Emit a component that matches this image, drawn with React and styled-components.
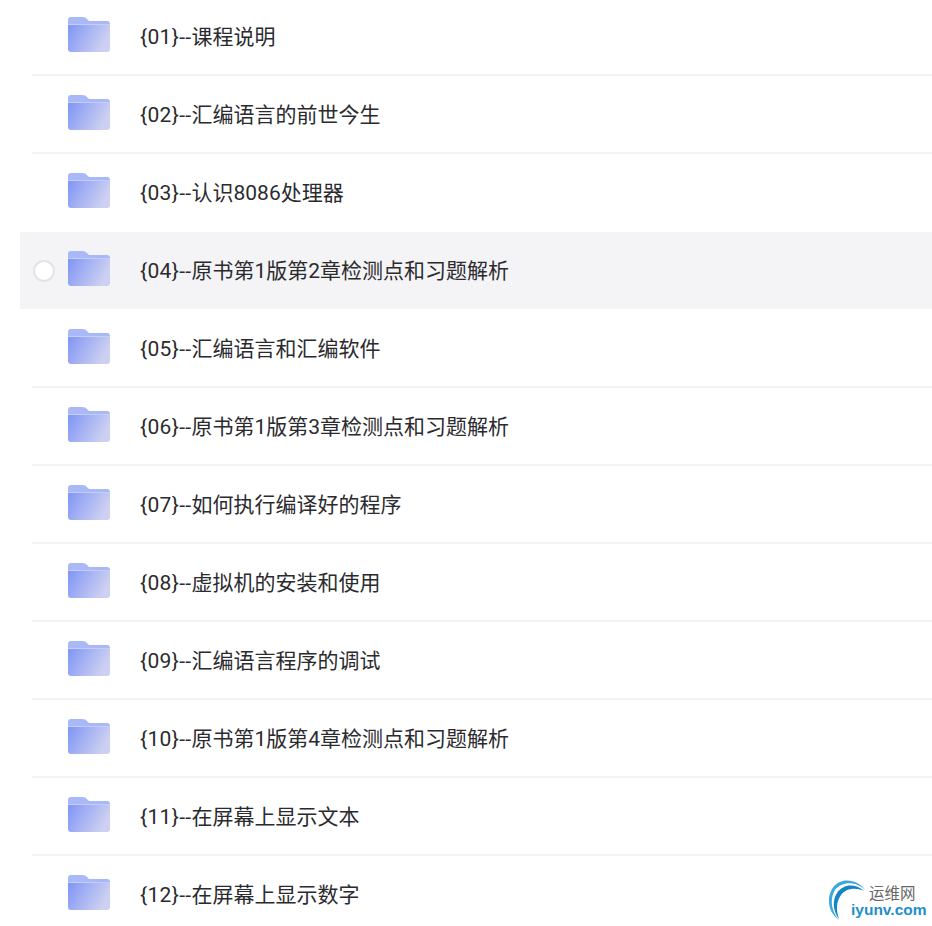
import React from "react";
import styled, { createGlobalStyle } from "styled-components";

const Global = createGlobalStyle`
  html, body {
    margin: 0;
    padding: 0;
    background: #fff;
    overflow: hidden;
  }
`;

const Page = styled.div`
  position: relative;
  width: 932px;
  height: 926px;
  overflow: hidden;
  background: #fff;
`;

const List = styled.ul`
  list-style: none;
  margin: -2px 0 0;
  padding: 0 0 0 20px;
`;

const Row = styled.li`
  height: 78px;
  box-sizing: border-box;
  padding-left: 12px;
  background: ${(p) => (p.$active ? "#f4f4f6" : "transparent")};
  border-bottom: ${(p) => (p.$active ? "1px solid #fff" : "0")};
`;

const RowInner = styled.div`
  display: flex;
  align-items: center;
  height: ${(p) => (p.$active ? "78px" : "100%")};
  box-sizing: border-box;
  padding-bottom: 2px;
  border-bottom: 2px solid ${(p) => (p.$plain ? "transparent" : "#f3f3f4")};
`;

const Check = styled.span`
  flex: none;
  width: 18px;
  height: 18px;
  margin: 4px 12px 0 1px;
  border: 2px solid #e3e3e5;
  border-radius: 50%;
  background: #fff;
  visibility: ${(p) => (p.$show ? "visible" : "hidden")};
`;

const FolderIcon = styled.svg`
  flex: none;
  width: 44px;
  height: 36px;
  margin: 0 29px 2px 0;
`;

const Name = styled.span`
  font-family: Roboto, "Noto Sans CJK SC", sans-serif;
  font-size: 21px;
  color: #2b2b2f;
  white-space: nowrap;
`;

const Prefix = styled.span`
  letter-spacing: 0.34px;
`;

const Mark = styled.div`
  position: absolute;
  left: 828px;
  top: 878px;
  width: 104px;
  height: 44px;
`;

const MarkArc = styled.svg`
  position: absolute;
  left: 0;
  top: 0;
  width: 44px;
  height: 44px;
`;

const MarkCn = styled.span`
  position: absolute;
  left: 41px;
  top: 5px;
  font-family: "Noto Sans CJK SC", sans-serif;
  font-size: 15.5px;
  line-height: 18px;
  color: #666;
`;

const MarkEn = styled.span`
  position: absolute;
  left: 23px;
  top: 23px;
  font-family: "Liberation Sans", sans-serif;
  font-size: 15.5px;
  font-weight: bold;
  line-height: 18px;
  color: #1d8fc9;
`;

const items = [
  ["{01}--", "课程说明"],
  ["{02}--", "汇编语言的前世今生"],
  ["{03}--", "认识8086处理器"],
  ["{04}--", "原书第1版第2章检测点和习题解析"],
  ["{05}--", "汇编语言和汇编软件"],
  ["{06}--", "原书第1版第3章检测点和习题解析"],
  ["{07}--", "如何执行编译好的程序"],
  ["{08}--", "虚拟机的安装和使用"],
  ["{09}--", "汇编语言程序的调试"],
  ["{10}--", "原书第1版第4章检测点和习题解析"],
  ["{11}--", "在屏幕上显示文本"],
  ["{12}--", "在屏幕上显示数字"],
];

const Folder = ({ id }) => (
  <FolderIcon viewBox="0 0 44 36">
    <defs>
      <linearGradient id={id} x1="0" y1="0" x2="1" y2="0.35">
        <stop offset="0" stopColor="#7f95f5" />
        <stop offset="1" stopColor="#cdd0f1" />
      </linearGradient>
    </defs>
    <path
      d="M1 4a3 3 0 0 1 3-3h11c2.5 0 4 .8 5.5 2.5L22 5h18a3 3 0 0 1 3 3v6H1z"
      fill="#a9b8f6"
    />
    <path
      d="M1 9h42v24a3 3 0 0 1-3 3H4a3 3 0 0 1-3-3z"
      fill={`url(#${id})`}
    />
    <rect x="1" y="8" width="42" height="1" fill="#c4cefa" />
  </FolderIcon>
);

export default function App() {
  return (
    <Page>
      <Global />
      <List>
        {items.map(([prefix, title], i) => (
          <Row key={prefix} $active={i === 3}>
            <RowInner $active={i === 3} $plain={i === 2 || i === 3}>
              <Check $show={i === 3} />
              <Folder id={`folder-${i}`} />
              <Name>
                <Prefix>{prefix}</Prefix>
                {title}
              </Name>
            </RowInner>
          </Row>
        ))}
      </List>
      <Mark>
        <MarkArc viewBox="0 0 44 44">
          <path d="M38 13C30 1 12-2 4 11c-6 11-3 24 7 31C4 34 1 22 7 12c7-9 22-9 31 1z" fill="#3aa7dd" />
          <path d="M36 13C27 5 15 6 9 15c-5 8-4 18 2 26-3-9-3-17 2-24 5-7 15-8 23-4z" fill="#1583c6" />
        </MarkArc>
        <MarkCn>运维网</MarkCn>
        <MarkEn>iyunv.com</MarkEn>
      </Mark>
    </Page>
  );
}
